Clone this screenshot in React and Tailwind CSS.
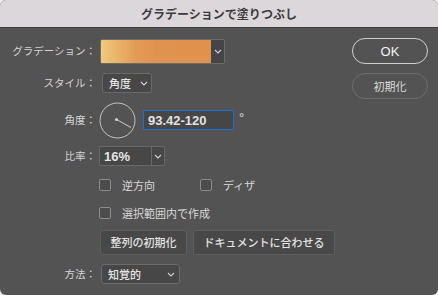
import React from 'react';

const jp = { fontFamily: '"Noto Sans CJK JP", "Noto Sans", sans-serif' };
const num = { fontFamily: '"Liberation Sans", "Noto Sans CJK JP", sans-serif' };

const Chevron = ({ className = '' }) => (
  <svg width="8" height="5" viewBox="0 0 8 5" className={className}>
    <polyline points="1,1 4,4 7,1" fill="none" stroke="#d0d0d0" strokeWidth="1.1" />
  </svg>
);

const Label = ({ children }) => (
  <div className="w-[96px] shrink-0 text-right text-[10.5px] text-[#d4d4d4] leading-none">
    {children}
  </div>
);

const Checkbox = ({ label }) => (
  <div className="flex items-center">
    <div className="w-[12px] h-[12px] rounded-[2px] border border-[#8c8c8c] bg-[#4c4c4c]" />
    <span className="ml-[11px] text-[11px] text-[#d8d8d8] leading-none">{label}</span>
  </div>
);

const App = () => {
  return (
    <div className="w-[438px] h-[295px] bg-[#ededed]" style={jp}>
      <div className="w-full h-full rounded-[6px] overflow-hidden bg-[#535353] flex flex-col">
        {/* タイトルバー */}
        <div className="h-[28px] shrink-0 bg-[#dcd7db] border-b border-[#3c3c3c] flex items-center justify-center">
          <span className="text-[12px] font-bold text-[#3b3b3b] leading-none">グラデーションで塗りつぶし</span>
        </div>

        <div className="flex flex-1">
          {/* 左側 */}
          <div className="flex-1 flex flex-col">
            <div className="mt-[11px] h-[25px] flex items-center">
              <Label>グラデーション：</Label>
              <div className="ml-[4px] w-[125px] h-[25px] flex rounded-[2px] border border-[#6c6c6c] overflow-hidden">
                <div
                  className="flex-1 h-full"
                  style={{ background: 'linear-gradient(90deg, #efcb7e 0%, #eab56a 14%, #e29c55 32%, #e0934e 50%, #e0924d 100%)' }}
                />
                <div className="w-[13px] h-full bg-[#454545] flex items-center justify-center">
                  <Chevron />
                </div>
              </div>
            </div>

            <div className="mt-[9px] h-[20px] flex items-center">
              <Label>スタイル：</Label>
              <div className="ml-[6px] w-[50px] h-[20px] flex items-center rounded-[3px] border border-[#6a6a6a] bg-[#474747] pl-[6px]">
                <span className="text-[11px] text-[#e6e6e6] leading-none font-medium">角度</span>
                <Chevron className="ml-[9px]" />
              </div>
            </div>

            <div className="mt-[9px] h-[36px] flex items-center">
              <Label>角度：</Label>
              <svg width="37" height="37" viewBox="0 0 37 37" className="ml-[3px]">
                <circle cx="18.5" cy="18.5" r="17.5" fill="none" stroke="#c4c4c4" strokeWidth="1" />
                <circle cx="17.5" cy="17.5" r="1.6" fill="#cfcfcf" />
                <line x1="17.5" y1="17.5" x2="32" y2="25.5" stroke="#cfcfcf" strokeWidth="1" />
              </svg>
              <div className="ml-[7px] w-[91px] h-[20px] border border-[#1b6ed3] bg-[#464646] flex items-center pl-[4px]">
                <span className="text-[13px] font-bold text-[#e2e2e2] leading-none" style={num}>93.42-120</span>
              </div>
              <span className="ml-[5px] -mt-[6px] text-[13px] text-[#e0e0e0] leading-none" style={num}>°</span>
            </div>

            <div className="mt-[8px] h-[20px] flex items-center">
              <Label>比率：</Label>
              <div className="ml-[3px] w-[66px] h-[20px] flex rounded-[3px] border border-[#6a6a6a] bg-[#474747]">
                <div className="w-[52px] h-full flex items-center pl-[4px] border-r border-[#6a6a6a]">
                  <span className="text-[13px] font-bold text-[#e4e4e4] leading-none" style={num}>16%</span>
                </div>
                <div className="flex-1 flex items-center justify-center">
                  <Chevron />
                </div>
              </div>
            </div>

            <div className="mt-[13px] h-[12px] flex items-center pl-[99px]">
              <Checkbox label="逆方向" />
              <div className="ml-[45px]">
                <Checkbox label="ディザ" />
              </div>
            </div>

            <div className="mt-[16px] h-[12px] flex items-center pl-[99px]">
              <Checkbox label="選択範囲内で作成" />
            </div>

            <div className="mt-[11px] h-[25px] flex items-center pl-[100px] gap-[6px]">
              <button className="w-[87px] h-[25px] rounded-[3px] border border-[#5e5e5e] bg-[#484848] text-[11px] text-[#e2e2e2] leading-none font-medium">
                整列の初期化
              </button>
              <button className="w-[142px] h-[25px] rounded-[3px] border border-[#5e5e5e] bg-[#484848] text-[11px] text-[#e2e2e2] leading-none font-medium">
                ドキュメントに合わせる
              </button>
            </div>

            <div className="mt-[9px] h-[20px] flex items-center">
              <Label>方法：</Label>
              <div className="ml-[5px] w-[79px] h-[20px] flex items-center justify-between rounded-[3px] border border-[#6a6a6a] bg-[#474747] pl-[6px] pr-[4px]">
                <span className="text-[11px] text-[#e6e6e6] leading-none font-medium">知覚的</span>
                <Chevron />
              </div>
            </div>
          </div>

          {/* 右側ボタン */}
          <div className="w-[86px] shrink-0 flex flex-col pt-[10px] pr-[10px]">
            <button className="w-[76px] h-[26px] rounded-full border-[1.5px] border-[#cfcfcf] text-[13px] text-[#f2f2f2] leading-none" style={num}>
              OK
            </button>
            <button className="mt-[9px] w-[76px] h-[26px] rounded-full border border-[#6e6e6e] text-[11px] text-[#dcdcdc] leading-none">
              初期化
            </button>
          </div>
        </div>
      </div>
    </div>
  );
};

export default App;
